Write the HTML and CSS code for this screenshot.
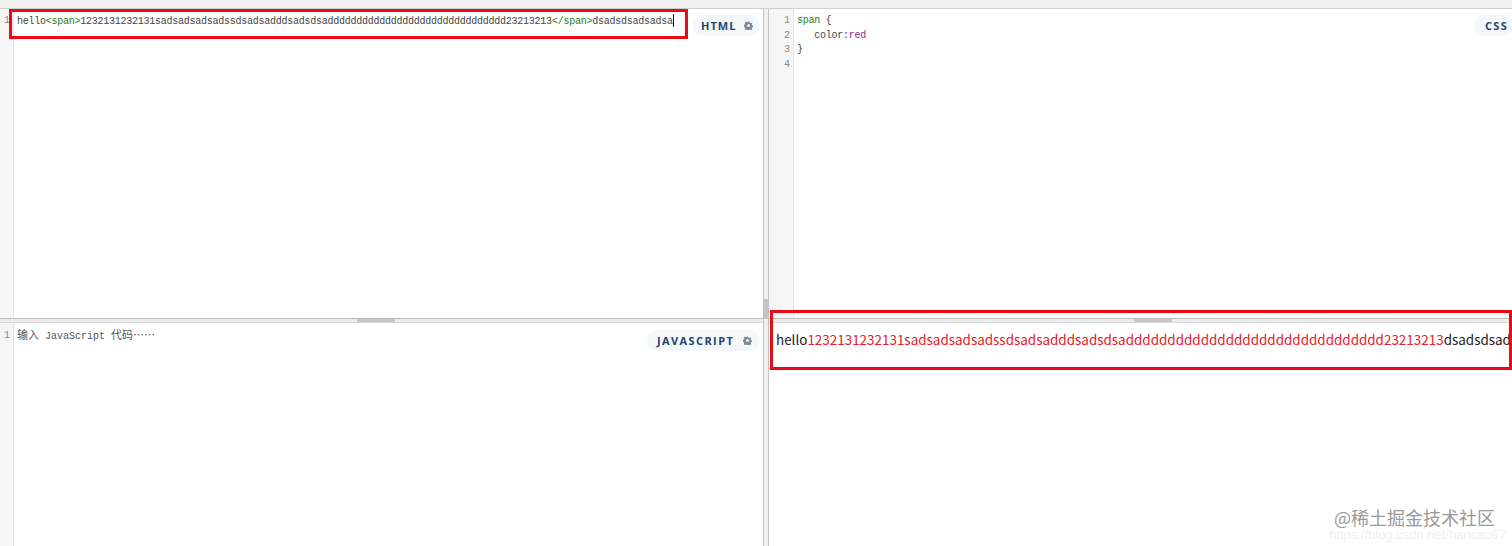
FILE: index.html
```html
<!DOCTYPE html>
<html lang="zh-CN">
<head>
<meta charset="utf-8">
<title>Playground</title>
<link rel="stylesheet" href="styles.css">
</head>
<body>
<div class="app">
  <div class="topstrip"></div>
  <div class="workspace">
    <div class="column column-left">
      <section class="pane pane-top">
        <div class="gutter"><div class="ln">1</div></div>
        <div class="code"><div class="line">hello<span class="tag">&lt;span&gt;</span>1232131232131sadsadsadsadssdsadsadddsadsdsaddddddddddddddddddddddddddddddd23213213<span class="tag">&lt;/span&gt;</span>dsadsdsadsadsa<span class="caret"></span></div></div>
        <div class="badge badge-html"><span class="badge-label">HTML</span><svg class="gear" viewBox="0 0 16 16"><path fill-rule="evenodd" d="M6.6 1h2.8l.4 2 1.4.6 1.7-1.1 2 2-1.1 1.7.6 1.4 2 .4v2.8l-2 .4-.6 1.4 1.1 1.7-2 2-1.7-1.1-1.4.6-.4 2H6.6l-.4-2-1.4-.6-1.7 1.1-2-2 1.1-1.7-.6-1.4-2-.4V6.6l2-.4.6-1.4-1.1-1.7 2-2 1.7 1.1 1.4-.6zM8 5.3a2.7 2.7 0 1 0 0 5.4 2.7 2.7 0 0 0 0-5.4z"/></svg></div>
      </section>
      <div class="resizer"><div class="grip"></div></div>
      <section class="pane pane-bottom">
        <div class="gutter gutter-low"><div class="ln">1</div></div>
        <div class="code code-low"><div class="line placeholder"><span class="cjk">输入</span> JavaScript <span class="cjk">代码……</span></div></div>
        <div class="badge badge-js"><span class="badge-label">JAVASCRIPT</span><svg class="gear" viewBox="0 0 16 16"><path fill-rule="evenodd" d="M6.6 1h2.8l.4 2 1.4.6 1.7-1.1 2 2-1.1 1.7.6 1.4 2 .4v2.8l-2 .4-.6 1.4 1.1 1.7-2 2-1.7-1.1-1.4.6-.4 2H6.6l-.4-2-1.4-.6-1.7 1.1-2-2 1.1-1.7-.6-1.4-2-.4V6.6l2-.4.6-1.4-1.1-1.7 2-2 1.7 1.1 1.4-.6zM8 5.3a2.7 2.7 0 1 0 0 5.4 2.7 2.7 0 0 0 0-5.4z"/></svg></div>
      </section>
    </div>
    <div class="divider"><div class="divider-grip"></div></div>
    <div class="column column-right">
      <section class="pane pane-top">
        <div class="gutter gutter-wide">
          <div class="ln">1</div><div class="ln">2</div><div class="ln">3</div><div class="ln">4</div>
        </div>
        <div class="code">
          <div class="line"><span class="tag">span</span> {</div>
          <div class="line">&nbsp;&nbsp;&nbsp;color:<span class="kw">red</span></div>
          <div class="line">}</div>
          <div class="line">&nbsp;</div>
        </div>
        <div class="badge badge-css"><span class="badge-label">CSS</span></div>
      </section>
      <div class="resizer"><div class="grip grip-right"></div></div>
      <section class="preview">hello<span class="red">1232131232131sadsadsadsadssdsadsadddsadsdsaddddddddddddddddddddddddddddddd23213213</span>dsadsdsadsadsa</section>
    </div>
  </div>
</div>
<div class="mark mark-code"></div>
<div class="mark mark-preview"></div>
<div class="watermark">@稀土掘金技术社区</div>
<div class="watermark-faint">https://blog.csdn.net/hancao97</div>
</body>
</html>
```

FILE: styles.css
```css
* { box-sizing: border-box; }
html, body { margin: 0; padding: 0; }
body {
  width: 1512px;
  height: 546px;
  overflow: hidden;
  position: relative;
  background: #fff;
  font-family: "Liberation Mono", "Noto Sans CJK SC", monospace;
}
.app { display: flex; flex-direction: column; height: 546px; }
.topstrip { height: 9px; background: #f1f1f1; border-bottom: 1px solid #cfcfcf; flex: none; }
.workspace { display: flex; flex: 1; min-height: 0; }
.column { display: flex; flex-direction: column; min-width: 0; }
.column-left { width: 763px; flex: none; }
.column-right { flex: 1; overflow: hidden; }
.divider {
  width: 6px;
  flex: none;
  background: #f0f0f0;
  border-left: 1px solid #c4c4c4;
  border-right: 1px solid #c4c4c4;
  padding-top: 290px;
}
.divider-grip { height: 20px; background: #c4c4c4; }
.pane { position: relative; display: flex; min-height: 0; background: #fff; }
.pane-top { height: 309px; flex: none; }
.pane-bottom { flex: 1; }
.resizer {
  height: 5px;
  flex: none;
  background: #ececec;
  border-top: 1px solid #bdbdbd;
  border-bottom: 1px solid #d8d8d8;
  display: flex;
  justify-content: flex-end;
}
.grip { width: 38px; margin-right: 368px; background: #c6c6c6; }
.grip-right { margin-right: 340px; }
.gutter {
  width: 14px;
  flex: none;
  background: #f6f6f6;
  border-right: 1px solid #e4e4e4;
  padding-top: 5px;
  font-size: 10px;
  line-height: 14.5px;
  color: #888;
  text-align: left;
  padding-left: 4px;
}
.gutter-low { padding-top: 6px; }
.gutter-wide { width: 25px; text-align: right; padding-left: 0; padding-right: 3px; }
.code {
  padding: 5px 0 0 3px;
  font-size: 10px;
  line-height: 14.5px;
  letter-spacing: -0.25px;
  color: #444;
  white-space: nowrap;
  min-width: 0;
}
.code-low { padding-top: 4px; letter-spacing: 0; }
.line { height: 14.5px; }
.tag { color: #1a7f1a; }
.kw { color: #8a1f8a; }
.placeholder { color: #555; }
.cjk { font-family: "Noto Sans CJK SC", sans-serif; font-size: 11px; }
.caret {
  display: inline-block;
  width: 1px;
  height: 13px;
  background: #111;
  vertical-align: -3px;
}
.badge {
  position: absolute;
  top: 6px;
  display: flex;
  align-items: center;
  height: 21px;
  gap: 8px;
  background: #f5f8fb;
  border-radius: 11px;
  font-family: "Open Sans", "Liberation Sans", sans-serif;
  font-size: 11px;
  font-weight: 700;
  letter-spacing: 1px;
  color: #25456e;
}
.badge-html { right: 3px; width: 67px; padding-left: 8px; }
.badge-js { right: 3px; top: 7px; width: 113px; padding-left: 10px; letter-spacing: 1.4px; }
.badge-css { right: -2px; width: 40px; padding-left: 11px; letter-spacing: 1.3px; }
.gear { width: 9px; height: 9px; fill: #7d8a96; flex: none; margin-left: auto; margin-right: 8px; }
.preview {
  flex: 1;
  padding: 6px 0 0 7px;
  font-family: "Noto Sans CJK SC", "Noto Sans", sans-serif;
  font-size: 13.45px;
  line-height: 20px;
  color: #222;
  white-space: nowrap;
  overflow: hidden;
}
.red { color: #e8202a; }
.mark { position: absolute; border: 3px solid #ec0a17; }
.mark-code { left: 9px; top: 9px; width: 679px; height: 30px; }
.mark-preview { left: 770px; top: 310px; width: 742px; height: 60px; }
.watermark {
  position: absolute;
  left: 1334px;
  top: 506px;
  font-family: "Noto Sans CJK SC", sans-serif;
  font-size: 18px;
  line-height: 22px;
  color: #9a9a9a;
  white-space: nowrap;
}
.watermark-faint {
  position: absolute;
  left: 1329px;
  top: 527px;
  font-family: "Liberation Sans", sans-serif;
  font-size: 13px;
  line-height: 16px;
  color: #f0f0f0;
  white-space: nowrap;
}
```
